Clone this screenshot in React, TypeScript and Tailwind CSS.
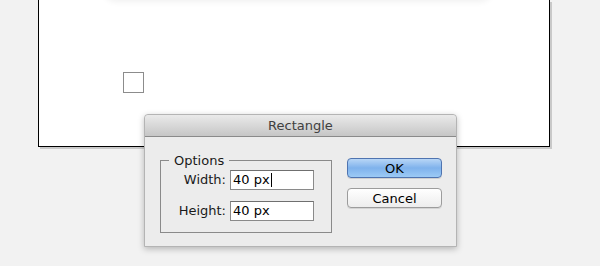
import React from "react"

const font = { fontFamily: '"DejaVu Sans", "Liberation Sans", sans-serif' }

function Field({ label, value, caret }: { label: string; value: string; caret?: boolean }) {
  return (
    <div className="flex items-center h-[20px]">
      <span className="w-[69px] pr-[4px] text-right text-[13px] text-[#1a1a1a]">{label}</span>
      <div className="w-[84px] h-[20px] bg-white border border-[#8a8a8a] border-t-[#6f6f6f] flex items-center pl-[2px] text-[13px] text-black">
        {value}
        {caret && <span className="w-px h-[14px] bg-black ml-px" />}
      </div>
    </div>
  )
}

export default function App() {
  return (
    <div className="relative w-[600px] h-[266px] bg-[#f2f2f2] overflow-hidden" style={font}>
      <div className="ml-[38px] w-[512px] h-[147px] pt-[72px] pl-[84px] bg-white border-x border-b border-black shadow-[2px_2px_0_#c9c9c9] relative">
        <div className="absolute -top-[20px] left-[66px] w-[386px] h-[20px] rounded-full shadow-[0_2px_6px_rgba(0,0,0,0.06)]" />
        <div className="w-[21px] h-[21px] border border-[#8c8c8c]" />
      </div>

      <div className="absolute left-[144px] top-[114px] w-[313px] h-[133px] bg-[#ececec] border border-[#b4b4b4] rounded-t-[4px] shadow-[0_2px_6px_rgba(0,0,0,0.25)] flex flex-col">
        <div className="h-[22px] rounded-t-[4px] bg-gradient-to-b from-[#eaeaea] to-[#c6c6c6] border-b border-[#8a8a8a] flex items-center justify-center text-[13px] text-[#404040]">
          Rectangle
        </div>
        <div className="flex pl-[15px] pt-[21px]">
          <div className="relative w-[172px] h-[73px] border border-[#8a8a8a] mt-[2px] pt-[9px] flex flex-col gap-[11px]">
            <span className="absolute -top-[10px] left-[8px] px-[5px] bg-[#ececec] text-[13px] text-[#1a1a1a]">Options</span>
            <Field label="Width:" value="40 px" caret />
            <Field label="Height:" value="40 px" />
          </div>
          <div className="ml-[15px] flex flex-col gap-[10px]">
            <button className="w-[95px] h-[20px] rounded-[4px] border border-[#4f74b0] bg-gradient-to-b from-[#b8d6f6] via-[#7fb2ec] to-[#9ccaf5] text-[13px] text-black shadow-[0_1px_0_rgba(0,0,0,0.12)]">
              OK
            </button>
            <button className="w-[95px] h-[20px] rounded-[4px] border border-[#9c9c9c] bg-gradient-to-b from-white to-[#ededed] text-[13px] text-black shadow-[0_1px_0_rgba(0,0,0,0.1)]">
              Cancel
            </button>
          </div>
        </div>
      </div>
    </div>
  )
}
